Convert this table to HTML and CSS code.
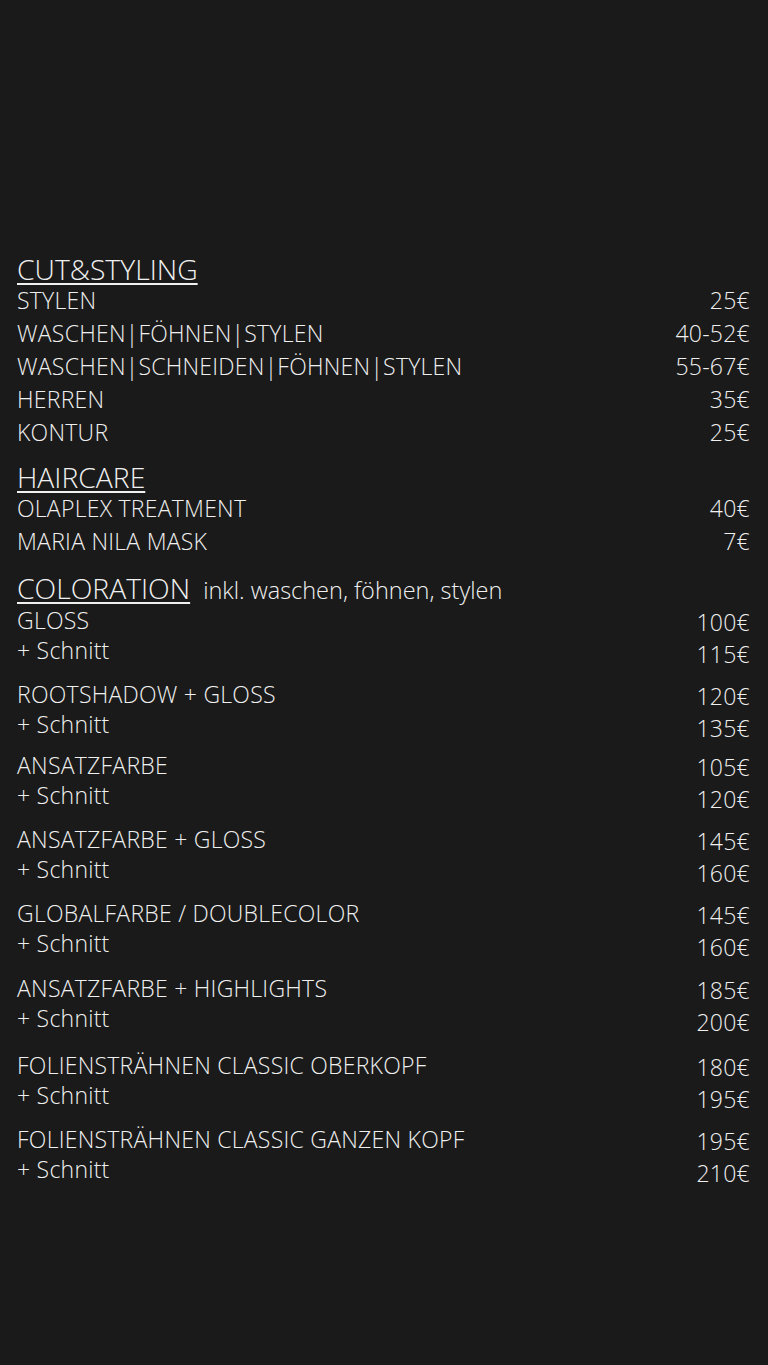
FILE: index.html
```html
<!DOCTYPE html>
<html lang="de">
<head>
<meta charset="utf-8">
<title>Preisliste</title>
<link rel="stylesheet" href="styles.css">
</head>
<body>
<main class="menu">
  <section class="section">
    <h2 class="heading"><span class="heading-text">CUT&amp;STYLING</span></h2>
    <div class="row"><span>STYLEN</span><span>25€</span></div>
    <div class="row"><span>WASCHEN|FÖHNEN|STYLEN</span><span>40-52€</span></div>
    <div class="row"><span>WASCHEN|SCHNEIDEN|FÖHNEN|STYLEN</span><span>55-67€</span></div>
    <div class="row"><span>HERREN</span><span>35€</span></div>
    <div class="row"><span>KONTUR</span><span>25€</span></div>
  </section>
  <section class="section">
    <h2 class="heading"><span class="heading-text">HAIRCARE</span></h2>
    <div class="row"><span>OLAPLEX TREATMENT</span><span>40€</span></div>
    <div class="row"><span>MARIA NILA MASK</span><span>7€</span></div>
  </section>
  <section class="section section-color">
    <h2 class="heading heading-note"><span class="heading-text">COLORATION</span><span class="note">inkl. waschen, föhnen, stylen</span></h2>
    <div class="group">
      <div class="names"><div>GLOSS</div><div>+ Schnitt</div></div>
      <div class="prices"><div>100€</div><div>115€</div></div>
    </div>
    <div class="group group-tight">
      <div class="names"><div>ROOTSHADOW + GLOSS</div><div>+ Schnitt</div></div>
      <div class="prices"><div>120€</div><div>135€</div></div>
    </div>
    <div class="group">
      <div class="names"><div>ANSATZFARBE</div><div>+ Schnitt</div></div>
      <div class="prices"><div>105€</div><div>120€</div></div>
    </div>
    <div class="group">
      <div class="names"><div>ANSATZFARBE + GLOSS</div><div>+ Schnitt</div></div>
      <div class="prices"><div>145€</div><div>160€</div></div>
    </div>
    <div class="group group-wide">
      <div class="names"><div>GLOBALFARBE / DOUBLECOLOR</div><div>+ Schnitt</div></div>
      <div class="prices"><div>145€</div><div>160€</div></div>
    </div>
    <div class="group group-wider">
      <div class="names"><div>ANSATZFARBE + HIGHLIGHTS</div><div>+ Schnitt</div></div>
      <div class="prices"><div>185€</div><div>200€</div></div>
    </div>
    <div class="group">
      <div class="names"><div>FOLIENSTRÄHNEN CLASSIC OBERKOPF</div><div>+ Schnitt</div></div>
      <div class="prices"><div>180€</div><div>195€</div></div>
    </div>
    <div class="group">
      <div class="names"><div>FOLIENSTRÄHNEN CLASSIC GANZEN KOPF</div><div>+ Schnitt</div></div>
      <div class="prices"><div>195€</div><div>210€</div></div>
    </div>
  </section>
</main>
</body>
</html>
```

FILE: styles.css
```css
html, body {
  margin: 0;
  padding: 0;
  background: #1a1a1a;
}
body {
  width: 768px;
  min-height: 1365px;
  color: #f0f0f0;
  font-family: "Open Sans", "Liberation Sans", sans-serif;
  font-weight: 300;
}
.menu {
  padding: 254px 18px 0 17px;
}
.section + .section {
  margin-top: 13px;
}
.section-color {
  margin-top: 15px !important;
}
.heading {
  margin: 0;
  font-size: 28.3px;
  font-weight: 300;
  line-height: 30px;
}
.heading-text {
  text-decoration: underline;
  text-decoration-thickness: 2px;
  text-underline-offset: 3px;
}
.heading-note {
  display: flex;
  align-items: baseline;
  gap: 13px;
}
.note {
  font-size: 23.5px;
}
.row,
.group {
  display: flex;
  justify-content: space-between;
  font-size: 23px;
  letter-spacing: 0.25px;
}
.row {
  line-height: 33px;
}
.group {
  margin-bottom: 9px;
}
.group-tight {
  margin-bottom: 6px;
}
.group-wide {
  margin-bottom: 10px;
}
.group-wider {
  margin-bottom: 12px;
}
.names {
  line-height: 30px;
}
.prices {
  line-height: 32px;
  padding-top: 1px;
  text-align: right;
}
```
